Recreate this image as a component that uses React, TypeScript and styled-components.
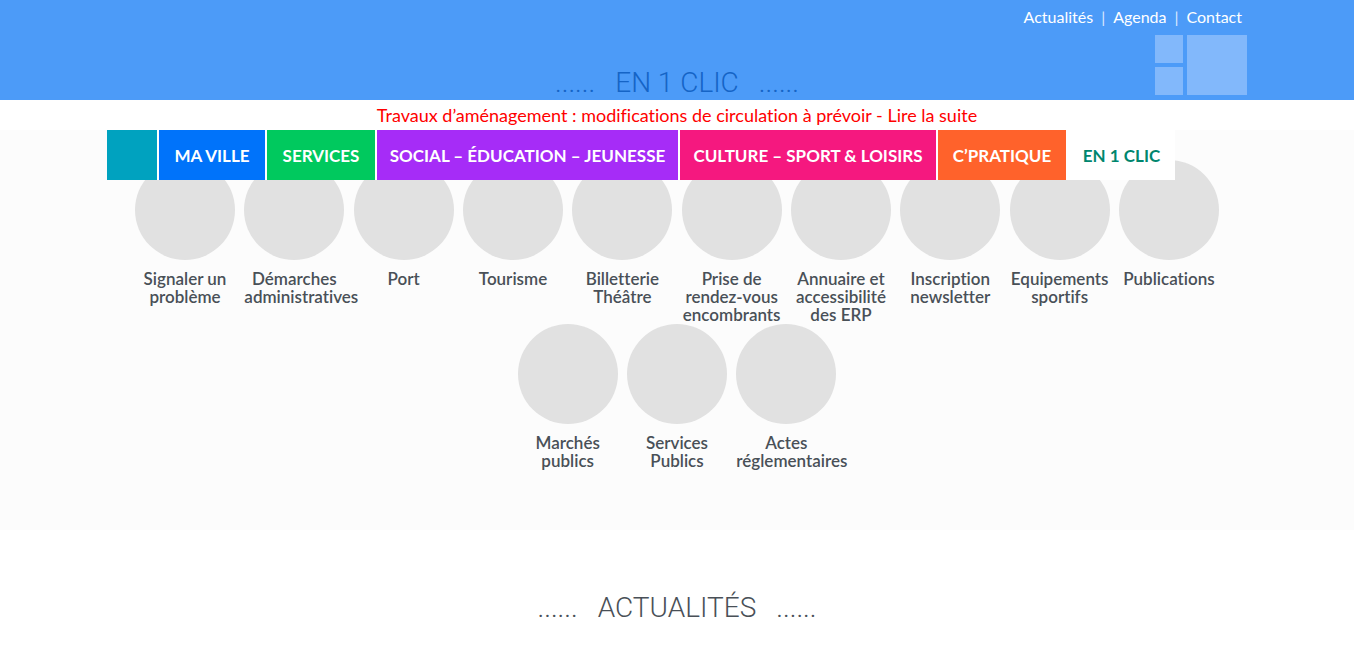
import React from "react";
import styled, { createGlobalStyle } from "styled-components";

const GlobalStyle = createGlobalStyle`
  *, *::before, *::after { box-sizing: border-box; }
  body {
    margin: 0;
    background: #fff;
    color: #495057;
    font-family: Lato, "Liberation Sans", sans-serif;
    font-size: 18px;
    font-variant-ligatures: none;
  }
  a { color: inherit; text-decoration: none; }
  ul { list-style: none; margin: 0; padding: 0; }
`;

const Page = styled.div`
  margin-right: 12px;
`;

const Header = styled.header`
  background: #4c9bf8;
`;

const Container = styled.div`
  width: 100%;
  max-width: 1140px;
  margin: 0 auto;
`;

const HeaderGrid = styled(Container)`
  display: grid;
  grid-template-columns: 1fr auto 1fr;
  height: 100px;
`;

const HeaderTitle = styled.div`
  grid-column: 2;
  align-self: end;
`;

const HeaderSide = styled.div`
  grid-column: 3;
  display: flex;
  flex-direction: column;
  align-items: flex-end;
`;

const TopLinks = styled.nav`
  display: flex;
  gap: 8px;
  height: 35px;
  padding-right: 5px;
  color: #fff;
  font-size: 16px;
  line-height: 33px;
`;

const Divider = styled.span`
  opacity: 0.8;
`;

const Tiles = styled.div`
  display: grid;
  grid-template-columns: 28px 60px;
  grid-template-rows: 28px 28px;
  gap: 4px;
`;

const Tile = styled.a<{ $large?: boolean }>`
  grid-column: ${(p) => (p.$large ? 2 : 1)};
  grid-row: ${(p) => (p.$large ? "1 / 3" : "auto")};
  background: #82b8fb;
`;

const TitleText = styled.h2<{ $color: string }>`
  display: flex;
  justify-content: center;
  gap: 20px;
  margin: 0;
  color: ${(p) => p.$color};
  font-family: Roboto, "Liberation Sans", sans-serif;
  font-size: 28px;
  font-weight: 300;
  line-height: 34px;
`;

const Alert = styled.p`
  margin: 0;
  color: #f00;
  text-align: center;
  line-height: 30px;
`;

const Quick = styled.section`
  min-height: 400px;
  background: #fcfcfc;
`;

const Menu = styled.ul`
  position: relative;
  z-index: 1;
  display: flex;
  gap: 2px;
  height: 50px;
`;

const MenuItem = styled.li<{ $bg: string; $color?: string; $width: number }>`
  min-width: ${(p) => p.$width}px;
  background: ${(p) => p.$bg};
  color: ${(p) => p.$color || "#fff"};
  box-shadow: 2px 0 0 #fff;

  &:last-child {
    box-shadow: none;
  }
`;

const MenuLink = styled.a`
  display: block;
  height: 50px;
  padding: 0 12px;
  font-size: 17px;
  font-weight: 700;
  line-height: 52px;
  text-align: center;
  white-space: nowrap;
`;

const Shortcuts = styled.ul`
  margin-top: -20px;
  font-size: 13px;
  line-height: 18px;
  text-align: center;
`;

const Shortcut = styled.li`
  display: inline-block;
  width: 100px;
  margin: 0 3px;
  vertical-align: top;
`;

const Disc = styled.span`
  display: block;
  height: 100px;
  margin-bottom: 10px;
  border-radius: 50%;
  background: #e1e1e1;
`;

const Label = styled.span`
  display: block;
  font-size: 17px;
  font-weight: 600;
`;

const News = styled.section`
  padding: 61px 0 26px;
`;

const menu = [
  { label: "", bg: "#00a2bf", width: 50 },
  { label: "MA VILLE", bg: "#0073fa", width: 106 },
  { label: "SERVICES", bg: "#00c95e", width: 108 },
  { label: "SOCIAL – ÉDUCATION – JEUNESSE", bg: "#a62cf7", width: 301 },
  { label: "CULTURE – SPORT & LOISIRS", bg: "#f5187f", width: 256 },
  { label: "C’PRATIQUE", bg: "#ff622b", width: 128 },
  { label: "EN 1 CLIC", bg: "#fff", color: "#00866e", width: 107 },
];

const shortcuts = [
  "Signaler un problème",
  "Démarches administratives",
  "Port",
  "Tourisme",
  "Billetterie Théâtre",
  "Prise de rendez-vous encombrants",
  "Annuaire et accessibilité des ERP",
  "Inscription newsletter",
  "Equipements sportifs",
  "Publications",
  "Marchés publics",
  "Services Publics",
  "Actes réglementaires",
];

function Title({ children, color }: { children: string; color: string }) {
  return (
    <TitleText $color={color}>
      <span>......</span>
      <span>{children}</span>
      <span>......</span>
    </TitleText>
  );
}

export default function App() {
  return (
    <Page>
      <GlobalStyle />
      <Header>
        <HeaderGrid>
          <HeaderTitle>
            <Title color="#1564c6">EN 1 CLIC</Title>
          </HeaderTitle>
          <HeaderSide>
            <TopLinks>
              <a href="#actualites">Actualités</a>
              <Divider>|</Divider>
              <a href="#agenda">Agenda</a>
              <Divider>|</Divider>
              <a href="#contact">Contact</a>
            </TopLinks>
            <Tiles>
              <Tile href="#" />
              <Tile href="#" />
              <Tile href="#" $large />
            </Tiles>
          </HeaderSide>
        </HeaderGrid>
      </Header>
      <Alert>
        <a href="#travaux">
          Travaux d’aménagement : modifications de circulation à prévoir - Lire la suite
        </a>
      </Alert>
      <Quick>
        <Container>
          <Menu>
            {menu.map((m) => (
              <MenuItem key={m.bg} $bg={m.bg} $color={m.color} $width={m.width}>
                <MenuLink href="#">{m.label}</MenuLink>
              </MenuItem>
            ))}
          </Menu>
          <Shortcuts>
            {shortcuts.map((s) => (
              <React.Fragment key={s}>
                <Shortcut>
                  <a href="#">
                    <Disc />
                    <Label>{s}</Label>
                  </a>
                </Shortcut>{" "}
              </React.Fragment>
            ))}
          </Shortcuts>
        </Container>
      </Quick>
      <News id="actualites">
        <Title color="#495057">ACTUALITÉS</Title>
      </News>
    </Page>
  );
}
